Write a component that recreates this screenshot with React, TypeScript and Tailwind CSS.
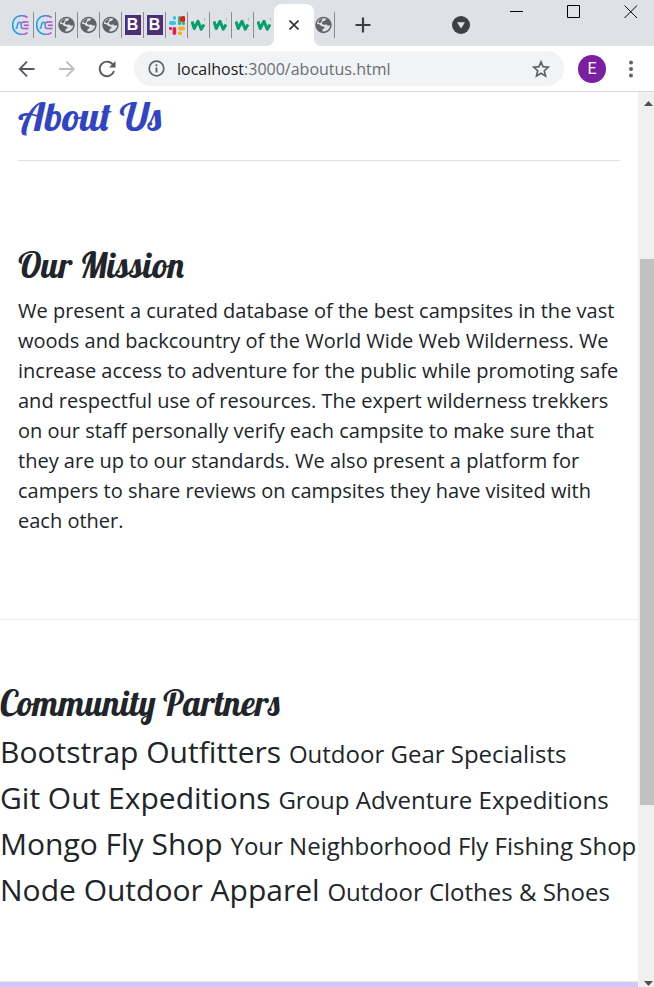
import React from "react";

type Kind = "nucamp" | "globe" | "bootstrap" | "slack" | "wave";

const pinned: Kind[] = [
  "nucamp", "nucamp", "globe", "globe", "globe", "bootstrap",
  "bootstrap", "slack", "wave", "wave", "wave", "wave",
];

const partners = [
  { name: "Bootstrap Outfitters", text: "Outdoor Gear Specialists" },
  { name: "Git Out Expeditions", text: "Group Adventure Expeditions" },
  { name: "Mongo Fly Shop", text: "Your Neighborhood Fly Fishing Shop" },
  { name: "Node Outdoor Apparel", text: "Outdoor Clothes & Shoes" },
];

function TabIcon({ kind }: { kind: Kind }) {
  if (kind === "nucamp")
    return (
      <svg viewBox="0 0 18 20" className="h-5 w-[18px]" fill="none" strokeWidth="1.600">
        <defs>
          <linearGradient id="nc" gradientUnits="userSpaceOnUse" x1="0" x2="18" y1="0" y2="0">
            <stop offset="0" stopColor="#0aa5e8" />
            <stop offset=".4" stopColor="#3f9be6" />
            <stop offset=".7" stopColor="#a45fd0" />
            <stop offset="1" stopColor="#c94fc4" />
          </linearGradient>
        </defs>
        <path d="M15.500 2.600C12.500-.3 6-.1 2.900 3.500-.1 7-.1 13 2.900 16.500 6 20.100 12.500 20.300 15.500 17.500" stroke="url(#nc)" />
        <path d="M3.600 13.500c1.500 0 1.500-.8 1.700-2.600.2-2.400.9-3.600 2.300-3.600s1.800 1 1.600 2.900c-.2 2.200.2 3.300 2 3.300l5.300.1M10 8c.6-.9 1.300-1.100 2.300-1.100l4.200.1M11.800 10.300l5 .1" stroke="url(#nc)" />
      </svg>
    );
  if (kind === "globe")
    return (
      <svg viewBox="0 0 17 18" className="h-[18px] w-[17px]">
        <circle cx="8.500" cy="9" r="8.200" fill="#5f6368" />
        <path d="M11.500 2.600 9.800 4.700 7.300 5.600 7 8 9 8.800l2.600-.3 1.300 1.300 2.300-.6c-.1 3.300-2.800 6-6.300 6.200l-1.700-.2.400-1.900 2-1.200-.5-1.400-3-.7-1.700-1.700L2 8C2.300 4.900 4.800 2.500 7.800 2.300Z" fill="#dee1e6" />
        <path d="M3.200 5.500C4.300 3.700 6 2.600 8 2.400L6.600 4.600l-.5 1.900L4 7.200Z" fill="#5f6368" />
      </svg>
    );
  if (kind === "bootstrap")
    return (
      <span className="flex h-5 w-4 items-center justify-center bg-[#4c3077] font-['Liberation_Sans',sans-serif] text-base font-bold text-white">
        B
      </span>
    );
  if (kind === "slack")
    return (
      <svg viewBox="0 0 16 20" className="h-5 w-4">
        <rect x="0" y="6" width="7" height="4" rx="1.800" fill="#36c5f0" />
        <rect x="4" y="1" width="3" height="4" rx="1.400" fill="#36c5f0" />
        <rect x="9" y="1" width="3.400" height="9" rx="1.600" fill="#2eb67d" />
        <circle cx="14" cy="4" r="3" fill="#f01a1a" />
        <rect x="13" y="7" width="3" height="3" rx="1.300" fill="#2eb67d" />
        <rect x="0" y="12" width="3" height="3" rx="1.300" fill="#e01e5a" />
        <rect x="3.600" y="12" width="3.600" height="8" rx="1.700" fill="#e01e5a" />
        <rect x="9" y="11.500" width="7" height="4" rx="1.800" fill="#ecb22e" />
        <rect x="9" y="16.500" width="4" height="3.500" rx="1.600" fill="#ecb22e" />
      </svg>
    );
  return (
    <svg viewBox="0 0 15 16" className="h-4 w-[15px]" fill="none" stroke="#059f6a">
      <path d="M1 4.500 3.200 11.500 7 4.300 10.200 12.300 13 7.500" strokeWidth="3" strokeLinejoin="round" />
      <path d="M13.500 1v2.500" strokeOpacity=".4" />
    </svg>
  );
}

function TabStrip() {
  return (
    <div className="flex h-[46px] items-start bg-[#dee1e6] pl-3">
      <div className="flex pt-3">
        {pinned.map((kind, i) => (
          <button
            key={i}
            aria-label={kind + " tab"}
            className="flex h-[26px] w-[22px] items-center justify-center border-r border-[#898b8f] first:justify-start last:w-5 last:border-r-0"
          >
            <TabIcon kind={kind} />
          </button>
        ))}
      </div>
      <div className="relative mt-1 flex h-[42px] w-10 items-center justify-center rounded-t-lg bg-white">
        <svg viewBox="0 0 8 8" className="absolute bottom-0 -left-2 size-2"><path d="M8 0v8H0c5 0 8-3 8-8Z" fill="#fff" /></svg>
        <svg viewBox="0 0 8 8" className="absolute -right-2 bottom-0 size-2"><path d="M0 0v8h8C3 8 0 5 0 0Z" fill="#fff" /></svg>
        <button aria-label="Close tab">
          <svg viewBox="0 0 10 10" className="size-[10px]" stroke="#33363a" strokeWidth="1.700"><path d="M.5.5l9 9M9.500.5l-9 9" /></svg>
        </button>
      </div>
      <button aria-label="globe tab" className="mt-3 ml-px flex h-[26px] w-5 items-center border-r border-[#898b8f]">
        <TabIcon kind="globe" />
      </button>
      <button aria-label="New tab" className="mt-[17px] ml-5">
        <svg viewBox="0 0 16 16" className="size-4" stroke="#3c4043" strokeWidth="2.200"><path d="M8 .5v15M.5 8h15" /></svg>
      </button>
      <button aria-label="Search tabs" className="mt-4 ml-[81px]">
        <svg viewBox="0 0 18 18" className="size-[18px]"><circle cx="9" cy="9" r="9" fill="#3c4043" /><path d="M5 6.300h8L9 12.500Z" fill="#dee1e6" /></svg>
      </button>
      <div className="ml-auto flex gap-[43px] pt-[5px] pr-4">
        <button aria-label="Minimize"><svg viewBox="0 0 14 14" className="size-[14px]" stroke="#000"><path d="M0 6.500h13" /></svg></button>
        <button aria-label="Maximize"><svg viewBox="0 0 14 14" className="size-[14px]" stroke="#000" fill="none"><path d="M.5.5h12v12H.5Z" /></svg></button>
        <button aria-label="Close"><svg viewBox="0 0 14 14" className="size-[14px]" stroke="#000"><path d="m.5.5 12.500 12.500M13 .5.5 13" /></svg></button>
      </div>
    </div>
  );
}

function Toolbar() {
  return (
    <div className="flex h-[46px] items-center border-b border-[#d9dbde] bg-white pr-[21px] pl-[18px]">
      <button aria-label="Back">
        <svg viewBox="0 0 18 18" className="size-[18px]" fill="none" stroke="#55585d" strokeWidth="1.800"><path d="M16.500 9H2M9 1.700 1.700 9 9 16.300" /></svg>
      </button>
      <button aria-label="Forward" className="ml-[22px]">
        <svg viewBox="0 0 18 18" className="size-[18px]" fill="none" stroke="#babcbe" strokeWidth="1.800"><path d="M1 9h14.500M8.500 1.700 15.800 9l-7.300 7.300" /></svg>
      </button>
      <button aria-label="Reload" className="ml-[22px]">
        <svg viewBox="0 0 18 18" className="size-[18px]" fill="none" stroke="#55585d" strokeWidth="1.900"><path d="M14.800 4.500A7.300 7.300 0 1 0 16 11" /><path d="M17.500 1v6.500H11Z" fill="#55585d" stroke="none" /></svg>
      </button>
      <div className="ml-[18px] flex h-[35px] min-w-0 flex-1 items-center rounded-full bg-[#f1f3f4] px-[14px]">
        <svg viewBox="0 0 17 17" className="size-[17px]" fill="none" stroke="#5f6368"><circle cx="8.500" cy="8.500" r="7.300" strokeWidth="1.700" /><path d="M8.500 7.500v5M8.500 4.300v1.900" strokeWidth="1.900" /></svg>
        <a href="#about" className="ml-3 flex-1 whitespace-nowrap font-['Open_Sans',sans-serif] text-base text-[#6a6e73]">
          <span className="text-[#202124]">localhost</span>:3000/aboutus.html
        </a>
        <button aria-label="Bookmark">
          <svg viewBox="0 0 18 18" className="size-[18px]" fill="none" stroke="#5f6368" strokeWidth="1.700"><path d="m9 1.900 2 4.800 5.300.5-4 3.500 1.200 5.200L9 13.200l-4.500 2.700 1.200-5.200-4-3.500L7 6.700Z" /></svg>
        </button>
      </div>
      <button className="ml-[14px] size-7 rounded-full bg-[#7b1fa2] font-['Roboto',sans-serif] text-base text-white">E</button>
      <button aria-label="Menu" className="ml-[23px]">
        <svg viewBox="0 0 4 18" className="h-[18px] w-1" fill="#5f6368"><circle cx="2" cy="2.500" r="2" /><circle cx="2" cy="9" r="2" /><circle cx="2" cy="15.500" r="2" /></svg>
      </button>
    </div>
  );
}

function Scrollbar() {
  return (
    <div className="flex w-4 shrink-0 flex-col items-end bg-[#f0f0f0]">
      <svg viewBox="0 0 14 17" className="h-[17px] w-[14px]"><path d="M4 14h9L8.500 9Z" fill="#505050" /></svg>
      <div className="flex-[150]" />
      <div className="w-[14px] flex-[546] bg-[#c1c1c1]" />
      <div className="flex-[165]" />
      <svg viewBox="0 0 14 17" className="h-[17px] w-[14px]"><path d="M4 11h9l-4.500 5Z" fill="#505050" /></svg>
    </div>
  );
}

export default function App() {
  return (
    <div className="flex min-h-screen flex-col bg-white font-['Open_Sans',sans-serif] text-[#212529]">
      <TabStrip />
      <Toolbar />
      <div className="flex flex-1">
        <main className="flex min-w-0 flex-1 flex-col">
          <header className="px-[18px]">
            <h1 id="about" className="border-b border-[#e0e0e0] pb-5 font-['Lobster',cursive] text-[40px] leading-[48px] font-medium text-[#3144c5]">
              About Us
            </h1>
          </header>
          <section className="border-b border-[#ececec] px-[18px] pt-20 pb-[83px]">
            <h2 className="font-['Lobster',cursive] text-[35px] leading-[48px] font-medium">Our Mission</h2>
            <p className="mt-[7px] text-xl leading-[30px]">
              We present a curated database of the best campsites in the vast woods and backcountry of the World Wide
              Web Wilderness. We increase access to adventure for the public while promoting safe and respectful use of
              resources. The expert wilderness trekkers on our staff personally verify each campsite to make sure that
              they are up to our standards. We also present a platform for campers to share reviews on campsites they
              have visited with each other.
            </p>
          </section>
          <section className="pt-[59px] pb-[68px]">
            <h2 className="font-['Lobster',cursive] text-[35px] leading-[48px] font-medium">Community Partners</h2>
            <ul className="mt-0.5">
              {partners.map((p) => (
                <li key={p.name} className="text-3xl leading-[46px] whitespace-nowrap">
                  {p.name} <small className="text-2xl leading-none">{p.text}</small>
                </li>
              ))}
            </ul>
          </section>
          <footer className="min-h-[6px] flex-1 border-t border-[#e9e9e9] bg-[#d0c8fc]" />
        </main>
        <Scrollbar />
      </div>
    </div>
  );
}
